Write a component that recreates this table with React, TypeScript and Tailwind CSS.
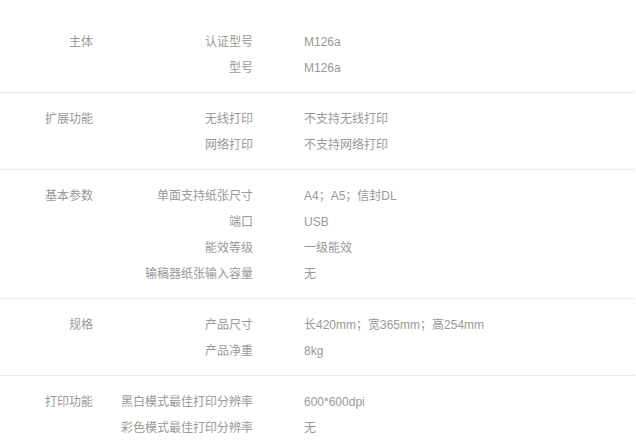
import React from 'react';

const sections = [
  {
    title: '主体',
    rows: [
      ['认证型号', 'M126a'],
      ['型号', 'M126a'],
    ],
  },
  {
    title: '扩展功能',
    rows: [
      ['无线打印', '不支持无线打印'],
      ['网络打印', '不支持网络打印'],
    ],
  },
  {
    title: '基本参数',
    rows: [
      ['单面支持纸张尺寸', 'A4；A5；信封DL'],
      ['端口', 'USB'],
      ['能效等级', '一级能效'],
      ['输稿器纸张输入容量', '无'],
    ],
  },
  {
    title: '规格',
    rows: [
      ['产品尺寸', '长420mm；宽365mm；高254mm'],
      ['产品净重', '8kg'],
    ],
  },
  {
    title: '打印功能',
    rows: [
      ['黑白模式最佳打印分辨率', '600*600dpi'],
      ['彩色模式最佳打印分辨率', '无'],
    ],
  },
];

const App = () => {
  return (
    <div
      className="w-[636px] h-[448px] bg-white overflow-hidden pt-[15px] text-[12px] leading-[26px] text-[#999]"
      style={{ fontFamily: '"Liberation Sans", "Noto Sans CJK SC", sans-serif' }}
    >
      {sections.map((section, i) => (
        <div
          key={section.title}
          className={`flex pt-[13px] pb-[11px] w-[635px] ${i > 0 ? 'border-t border-[#ebebeb]' : 'border-t border-transparent'}`}
        >
          <div className="w-[93px] shrink-0 text-right">{section.title}</div>
          <div className="flex flex-col">
            {section.rows.map(([key, value]) => (
              <div key={key} className="flex">
                <div className="w-[160px] shrink-0 text-right">{key}</div>
                <div className="ml-[51px] whitespace-nowrap">{value}</div>
              </div>
            ))}
          </div>
        </div>
      ))}
    </div>
  );
};

export default App;
